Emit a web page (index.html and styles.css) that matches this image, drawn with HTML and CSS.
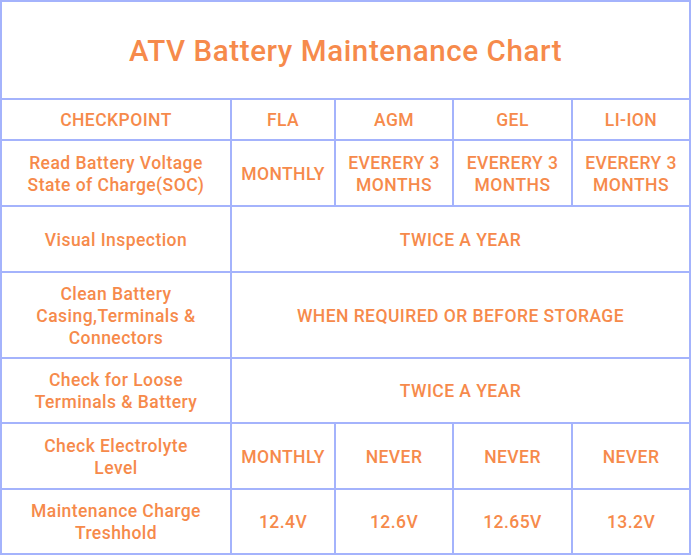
FILE: index.html
```html
<!DOCTYPE html>
<html lang="en">
<head>
<meta charset="utf-8">
<title>ATV Battery Maintenance Chart</title>
<link rel="stylesheet" href="styles.css">
</head>
<body>
<div class="chart">
  <div class="cell title">ATV Battery Maintenance Chart</div>

  <div class="cell">CHECKPOINT</div>
  <div class="cell">FLA</div>
  <div class="cell">AGM</div>
  <div class="cell">GEL</div>
  <div class="cell">LI-ION</div>

  <div class="cell">Read Battery Voltage<br>State of Charge(SOC)</div>
  <div class="cell">MONTHLY</div>
  <div class="cell">EVERERY 3<br>MONTHS</div>
  <div class="cell">EVERERY 3<br>MONTHS</div>
  <div class="cell">EVERERY 3<br>MONTHS</div>

  <div class="cell">Visual Inspection</div>
  <div class="cell span4">TWICE A YEAR</div>

  <div class="cell">Clean Battery<br>Casing,Terminals &amp;<br>Connectors</div>
  <div class="cell span4">WHEN REQUIRED OR BEFORE STORAGE</div>

  <div class="cell">Check for Loose<br>Terminals &amp; Battery</div>
  <div class="cell span4">TWICE A YEAR</div>

  <div class="cell">Check Electrolyte<br>Level</div>
  <div class="cell">MONTHLY</div>
  <div class="cell">NEVER</div>
  <div class="cell">NEVER</div>
  <div class="cell">NEVER</div>

  <div class="cell">Maintenance Charge<br>Treshhold</div>
  <div class="cell">12.4V</div>
  <div class="cell">12.6V</div>
  <div class="cell">12.65V</div>
  <div class="cell">13.2V</div>
</div>
</body>
</html>
```

FILE: styles.css
```css
html, body {
  margin: 0;
  padding: 0;
  background: #ffffff;
}

.chart {
  width: 691px;
  box-sizing: border-box;
  display: grid;
  grid-template-columns: 228px 102px 116px 117px 116px;
  grid-template-rows: 96px 39px 64px 64px 84px 63px 64px 63px;
  gap: 2px;
  padding: 2px;
  background: #a4b3fc;
  font-family: Roboto, "Liberation Sans", sans-serif;
  font-size: 17.5px;
  font-weight: 500;
  letter-spacing: 0.45px;
  line-height: 22px;
  color: #f68a4b;
}

.cell {
  background: #ffffff;
  display: flex;
  align-items: center;
  justify-content: center;
  text-align: center;
  padding-top: 1px;
}

.title {
  grid-column: 1 / -1;
  font-size: 29.5px;
  letter-spacing: 0.6px;
  font-weight: 500;
}

.span4 {
  grid-column: 2 / -1;
}
```
